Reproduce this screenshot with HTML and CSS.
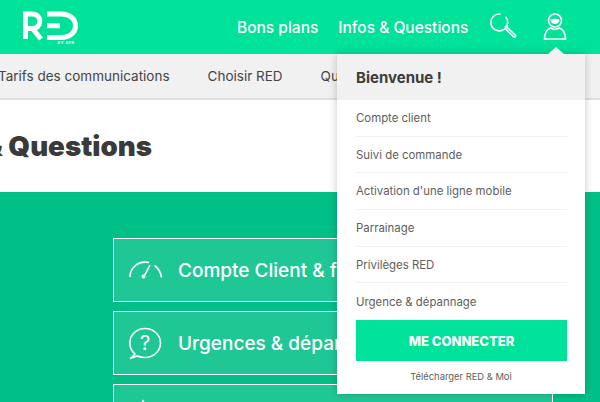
FILE: index.html
```html
<!DOCTYPE html>
<html lang="fr">
<head>
<meta charset="utf-8">
<title>RED - Infos &amp; Questions</title>
<link rel="stylesheet" href="styles.css">
</head>
<body>
<div class="page">
  <header class="topbar">
    <a class="logo" href="#">
      <svg width="60" height="36" viewBox="0 0 60 36">
        <path class="logo-stroke" d="M3.500 28V3H10C15.500 3 17.800 6.500 17.800 10.300S15.500 17.500 10 17.500H3.500M10.500 17.500L19 28"/>
        <path class="logo-stroke" d="M25 3H39C48 3 53.500 8 53.500 14.800S48 26.500 39 26.500H25M25 14.800H38"/>
        <text class="logo-by" x="35.500" y="33">BY SFR</text>
      </svg>
    </a>
    <nav class="mainnav">
      <a href="#">Bons plans</a>
      <a href="#">Infos &amp; Questions</a>
    </nav>
    <div class="tools">
      <svg class="tool-search" width="30" height="30" viewBox="0 0 30 30">
        <path class="icon-line" d="M10.500 2.100A8.400 8.400 0 1 0 15.500 4.800"/>
        <path class="icon-line" d="M14.800 15.300L16 14.200L25.400 23.300C26.200 24.200 24.700 25.800 23.800 25L14.800 16.200"/>
      </svg>
      <svg class="tool-user" width="24" height="28" viewBox="0 0 24 28">
        <circle class="icon-line" cx="12" cy="7.500" r="6.500"/>
        <path class="icon-fill" d="M7.500 6.500C9.500 5.500 14.500 5.500 16.500 6.500C16.500 9.500 14.500 11 12 11S7.500 9.500 7.500 6.500Z"/>
        <path class="icon-line" d="M7.500 15C3.500 16.500 1.500 20 1.500 26H22.500C22.500 20 20.500 16.500 16.500 15C14 16.500 10 16.500 7.500 15Z"/>
      </svg>
    </div>
  </header>

  <nav class="subnav">
    <a href="#">Tarifs des communications</a>
    <a href="#">Choisir RED</a>
    <a href="#">Questions</a>
  </nav>

  <section class="titlebar">
    <h1>Infos &amp; Questions</h1>
  </section>

  <main class="content">
    <a class="card" href="#">
      <svg class="card-icon" width="36" height="36" viewBox="0 0 36 36">
        <path class="icon-line" d="M2 25C2 21 3.500 17 7 14C10 11 15 9.500 21 10.500M26.500 13.500C30.500 16.500 33 21 33.500 25.500"/>
        <path class="icon-line" d="M16.500 23.500L22 13"/>
        <circle class="icon-fill" cx="15.500" cy="24.500" r="2"/>
      </svg>
      <span>Compte Client &amp; facture</span>
    </a>
    <a class="card" href="#">
      <svg class="card-icon" width="36" height="36" viewBox="0 0 36 36">
        <path class="icon-line" d="M7 29C3.500 26 1.800 22.500 1.800 18C1.800 10 8.500 3.500 17 3.500S32.500 10 32.500 18S25.500 32.500 17 32.500C14 32.500 11.500 32 9 31L2 33.500C4.500 32 6 30.500 7 29Z"/>
        <text class="card-q" x="17" y="24.500">?</text>
      </svg>
      <span>Urgences &amp; dépannage</span>
    </a>
    <a class="card" href="#">
      <svg class="card-icon" width="36" height="36" viewBox="0 0 36 36">
        <path class="icon-line" d="M15 3L19 11L28 12L21 18L23 27L15 23L7 27L9 18L2 12L11 11Z"/>
      </svg>
    </a>
  </main>

  <aside class="dropdown">
    <span class="caret"></span>
    <div class="dropdown-head">Bienvenue !</div>
    <ul class="dropdown-list">
      <li><a href="#">Compte client</a></li>
      <li><a href="#">Suivi de commande</a></li>
      <li><a href="#">Activation d'une ligne mobile</a></li>
      <li><a href="#">Parrainage</a></li>
      <li><a href="#">Privilèges RED</a></li>
      <li><a href="#">Urgence &amp; dépannage</a></li>
    </ul>
    <a class="connect" href="#">ME CONNECTER</a>
    <a class="download" href="#">Télécharger RED &amp; Moi</a>
  </aside>
</div>
</body>
</html>
```

FILE: styles.css
```css
* { box-sizing: border-box; }
html, body { margin: 0; padding: 0; }
body { font-family: Inter, "Liberation Sans", sans-serif; color: #3c3c3c; }
a { color: inherit; text-decoration: none; }
.page { position: relative; width: 600px; height: 402px; overflow: hidden; background: #fff; }

.topbar { height: 54px; background: #00e19a; display: flex; align-items: center; padding-left: 22px; color: #fff; }
.logo { display: flex; width: 215px; padding-top: 3px; }
.logo-stroke { fill: none; stroke: #fff; stroke-width: 5; }
.logo-by { fill: #fff; font-size: 4px; font-weight: 700; letter-spacing: .5px; }
.mainnav { display: flex; gap: 20px; font-size: 15.500px; font-weight: 500; white-space: nowrap; }
.tools { display: flex; align-items: center; margin-left: 22px; }
.tool-search { margin-right: 23px; }
.icon-line { fill: none; stroke: #fff; stroke-width: 1.600; }
.icon-fill { fill: #fff; }

.subnav { height: 46px; background: #f1f1f1; border-bottom: 2px solid #dedede; display: flex; align-items: center; gap: 38px; margin-left: -2px; font-size: 13.500px; color: #444; white-space: nowrap; overflow: hidden; }

.titlebar { height: 92px; display: flex; align-items: center; justify-content: flex-end; width: 152px; white-space: nowrap; }
.titlebar h1 { margin: 0; font-size: 27.700px; font-weight: 900; color: #3a3a3a; flex: none; }

.content { height: 210px; background: #00c087; padding: 46px 47px 0 113px; display: flex; flex-direction: column; gap: 9px; }
.card { flex: none; height: 64px; border: 1px solid #fff; background: rgba(255, 255, 255, .12); display: flex; align-items: center; gap: 14px; padding-left: 14px; color: #fff; font-size: 19px; font-weight: 500; white-space: nowrap; }
.card-q { fill: #fff; font-size: 20px; font-weight: 400; text-anchor: middle; }

.dropdown { position: absolute; top: 54px; left: 337px; width: 248px; height: 340px; background: #fff; box-shadow: 0 0 8px rgba(0, 0, 0, .22); display: flex; flex-direction: column; align-items: stretch; }
.caret { position: absolute; top: -7px; left: 211px; border-left: 8px solid transparent; border-right: 8px solid transparent; border-bottom: 7px solid #f1f1f1; }
.dropdown-head { flex: none; height: 46px; background: #f1f1f1; padding-left: 19px; display: flex; align-items: center; font-size: 15px; font-weight: 700; color: #3c3c3c; }
.dropdown-list { list-style: none; margin: 0 18px 0 19px; padding: 0; font-size: 11.400px; color: #5e5e5e; }
.dropdown-list li { height: 36.700px; display: flex; align-items: center; border-bottom: 1px solid #f1f1f1; white-space: nowrap; }
.dropdown-list li:last-child { border-bottom: 0; }
.connect { flex: none; margin: 0 18px 0 19px; height: 41px; background: #00e19a; color: #fff; font-size: 13px; font-weight: 800; display: flex; align-items: center; justify-content: center; }
.download { flex: none; margin-top: 10px; text-align: center; font-size: 9.400px; color: #5e5e5e; }
```
